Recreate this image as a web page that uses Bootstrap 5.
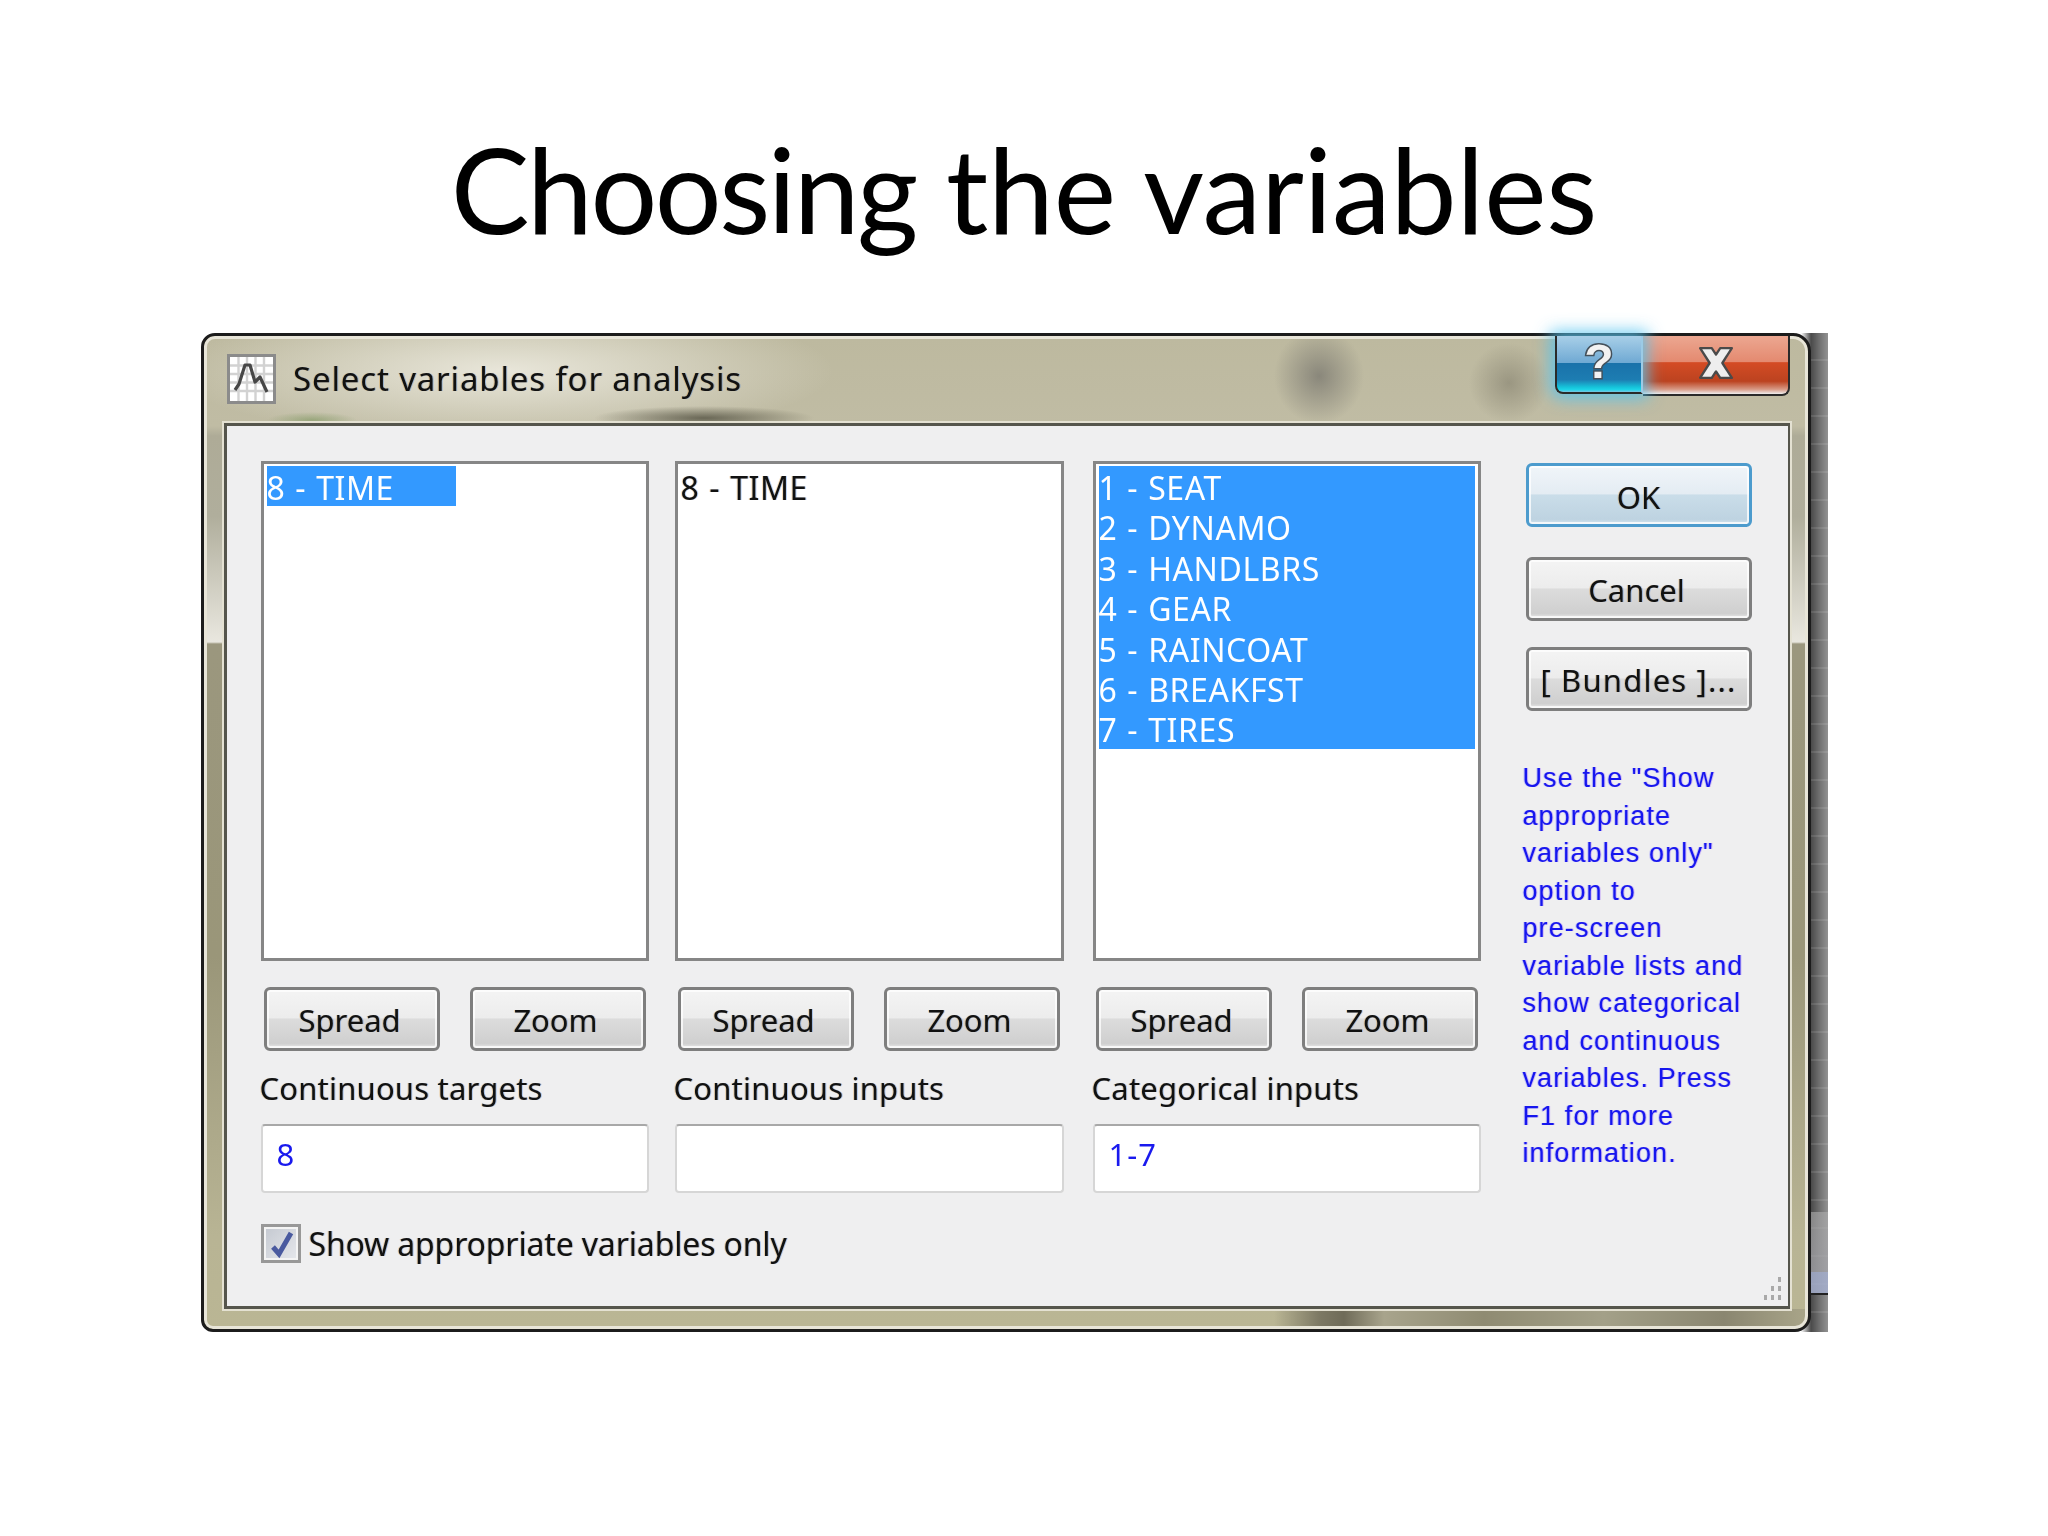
<!DOCTYPE html>
<html lang="en">
<head>
<meta charset="utf-8">
<title>Choosing the variables</title>
<link href="https://cdn.jsdelivr.net/npm/bootstrap@5.3.0/dist/css/bootstrap.min.css" rel="stylesheet">
<style>
html,body{background:#fff;margin:0}
.slide{width:2048px;height:1536px;overflow:hidden}
.slide-head{height:333px;padding-top:130px}
.slide-title{font-family:Lato,"Liberation Sans",sans-serif;font-size:118px;line-height:1;font-weight:400;color:#000;margin:0;letter-spacing:-.15px}
.title-tight{letter-spacing:-2.5px}
.dlg-wrap{width:1627px;height:999px;margin-left:201px;filter:blur(.55px);
 background:linear-gradient(180deg,transparent 0,transparent 879px,rgba(175,175,175,.6) 879px,rgba(165,165,170,.75) 939px,rgba(165,175,205,.85) 939px,rgba(165,175,205,.85) 960px,#222 960px,#222 962px,transparent 962px),
 repeating-linear-gradient(180deg,transparent 0 26px,rgba(255,255,255,.1) 26px 28px),
 linear-gradient(90deg,transparent 1600px,#4a4a4a 1610px,#6e6e6e 1618px,#929292 1627px)}
.dlg-win{width:1610px;height:999px;position:relative;border:3px solid #1c1c1c;border-radius:14px 18px 16px 12px;
 font-family:"Noto Sans","Liberation Sans",sans-serif;color:#111;
 text-shadow:1px 0 rgba(0,90,220,.28),-1px 0 rgba(220,130,0,.28);
 background:
 linear-gradient(90deg,transparent 1070px,#7d7964 1115px,#6f6b58 1140px,#a8a48c 1180px,#8f8b72 1280px,#a3a088 1400px,#8a8670 1520px,#a8a488 1600px) left bottom/100% 20px no-repeat,
 radial-gradient(ellipse 45px 48px at 1115px 40px,rgba(120,118,110,.75),transparent 100%),
 radial-gradient(ellipse 40px 40px at 1305px 47px,rgba(130,126,108,.6),transparent 100%),
 radial-gradient(ellipse 110px 12px at 500px 82px,rgba(90,88,72,.85),transparent 100%),
 radial-gradient(ellipse 45px 8px at 108px 84px,rgba(125,150,95,.6),transparent 100%),
 radial-gradient(ellipse 330px 70px at 300px 35px,rgba(240,238,228,.85),transparent 100%),
 linear-gradient(180deg,#bdb99f 0,#c0bca4 90px,#aeab97 100px,#b0ae9c 180px,#e9e7df 306px,#9b977e 308px,#9a9679 620px,#b8b494 900px,#bab694 999px);
 box-shadow:inset 0 0 0 3px #e8e5d8}
.dlg-bar{height:87px;position:relative}
.dlg-appicon{width:49px;height:50px;margin-left:23px;margin-top:18px;border:3px solid #8b8b8b;background:#fff;flex:none}
.dlg-appicon svg{display:block}
.dlg-caption{font-size:33px;line-height:1;margin-left:17px;margin-top:26px;letter-spacing:.85px}
.cap-group{margin-left:auto;margin-right:18px}
.cap-help,.cap-close{height:58px;display:flex;align-items:flex-start;justify-content:center;border:2px solid #2a2a2a;border-top:0;font-family:"Liberation Sans",sans-serif}
.cap-help{width:88px;border-right-color:#9ccbe6;border-radius:0 0 0 8px;background:linear-gradient(180deg,#a8cfe8 0,#6fa9d3 48%,#1a72aa 49%,#1d7db2 78%,#16c6dc 92%,#1fd4e8 96%,#7fc2df 100%);box-shadow:0 0 16px 5px rgba(88,196,240,.85);position:relative}
.cap-close{width:147px;height:60px;border-left:0;border-radius:0 0 8px 0;background:linear-gradient(180deg,#eca791 0,#e48a70 44%,#d44b24 46%,#bc4320 78%,#d89a86 92%,#eee 100%)}
.cap-q{font-size:48px;font-weight:700;line-height:1;margin-top:2px;color:#f2f2f2;-webkit-text-stroke:3px #44505a;paint-order:stroke fill;text-shadow:none}
.cap-x{margin-top:10px}
.dlg-panel{width:1566px;height:886px;margin-left:20px;position:relative;background:#efeff0;border:3px solid #55554c;border-width:3px 2px 3px 3px;padding:35px 0 0 33.5px;box-shadow:0 0 0 2px #e4e1d2}
.dlg-grid{display:grid;grid-template-columns:414px 418px 433px 226px}
.col-a{width:388px}
.col-b{width:389px}
.var-box{height:500px;border:3px solid #868686;background:#fff;padding:2px 3px;font-size:32px}
.var-list{--bs-list-group-bg:transparent;--bs-list-group-border-width:0;--bs-list-group-item-padding-x:0;--bs-list-group-item-padding-y:0;border-radius:0}
.var-row{height:40.4px;line-height:43px;padding:0;color:#111;letter-spacing:.6px;word-spacing:1px;white-space:nowrap}
.var-sel{background:#3399ff;color:#fff;text-shadow:none}
.var-sel-short{width:189px}
.var-tools{margin-top:26px;padding-left:3px;gap:30px}
.dlg-btn{height:64px;padding:2px 0 0;border:3px solid #7e7e7e;border-radius:6px;color:#111;font-size:31px;line-height:1;
 background:linear-gradient(180deg,#f4f4f4 0,#ececec 48%,#dcdcdc 50%,#cfcfcf 92%,#e8e8e8 100%);
 box-shadow:inset 0 0 0 2px rgba(255,255,255,.75);text-shadow:inherit;letter-spacing:0}
.dlg-btn:hover,.dlg-btn:focus{border-color:#7e7e7e;background:linear-gradient(180deg,#f4f4f4 0,#ececec 48%,#dcdcdc 50%,#cfcfcf 92%,#e8e8e8 100%);color:#111}
.btn-small{width:176px;padding-right:4px}
.btn-side{width:226px;display:block}
.btn-primaryish{margin-top:2px;padding-top:5px;border-color:#4c9bcd;background:linear-gradient(180deg,#f0f5f9 0,#e4ecf3 48%,#cadde9 50%,#bed3e1 92%,#d4e6f0 100%)}
.btn-primaryish:hover,.btn-primaryish:focus{border-color:#4c9bcd;background:linear-gradient(180deg,#f0f5f9 0,#e4ecf3 48%,#cadde9 50%,#bed3e1 92%,#d4e6f0 100%)}
.cancel-gap{margin-top:30px;padding-right:4px}
.bundles-gap{margin-top:26px;letter-spacing:1.2px;padding-right:0}
.var-label{font-size:31px;line-height:1;height:73px;padding-top:22px;margin-left:-1px;letter-spacing:.2px;white-space:nowrap}
.var-input{height:69px;background:#fff;border:2px solid #d6d6d6;border-top-color:#a8a8a8;border-radius:4px;color:#1a1aee;font-size:31px;line-height:1;padding:13px 14px;text-shadow:none;box-shadow:none;letter-spacing:1px}
.opt-row{margin-top:31px;height:39px}
.opt-check{width:40px;height:39px;border:3px solid #989898;background:linear-gradient(135deg,#c4c8d0,#e6e8ec);box-shadow:inset 0 0 0 2px #f4f4f4;flex:none}
.opt-check svg{display:block}
.opt-text{font-size:32px;line-height:39px;margin-left:8px;letter-spacing:-.15px;white-space:nowrap}
.side-help{margin:0;margin-left:-3px;margin-top:49px;font-family:"Liberation Sans",sans-serif;font-size:27px;line-height:37.5px;color:#1616ee;text-shadow:1px 0 rgba(150,90,255,.35),-1px 0 rgba(120,120,255,.35);width:250px;letter-spacing:1.1px}
.grip{position:absolute;right:6px;bottom:5px}
</style>
</head>
<body>
<div class="slide">
  <div class="slide-head text-center"><h1 class="slide-title"><span class="title-tight">Choosing</span> the variables</h1></div>
  <div class="dlg-wrap">
    <div class="dlg-win">
      <div class="dlg-bar d-flex align-items-start">
        <div class="dlg-appicon">
          <svg width="43" height="44" viewBox="0 0 43 44">
            <rect width="43" height="44" fill="#fff"/>
            <path d="M8.5 0V44M17 0V44M25.5 0V44M34 0V44M0 8.5H43M0 17H43M0 25.5H43M0 34H43" stroke="#d2d2d2" stroke-width="2.4" fill="none"/>
            <path d="M5 33 9 27 15 8 20 8 25 25 30 20 37 35" stroke="#474747" stroke-width="3.2" fill="none" stroke-linejoin="round"/>
          </svg>
        </div>
        <div class="dlg-caption">Select variables for analysis</div>
        <div class="cap-group d-flex">
          <div class="cap-help"><span class="cap-q">?</span></div>
          <div class="cap-close">
            <svg class="cap-x" width="36" height="34" viewBox="0 0 34 32"><path d="M2 2H13L17 8 21 2H32L23 16 32 30H21L17 24 13 30H2L11 16Z" fill="#eeeeee" stroke="#4a4a4a" stroke-width="2.2" stroke-linejoin="round"/></svg>
          </div>
        </div>
      </div>
      <div class="dlg-panel">
        <div class="dlg-grid">
          <div class="col-a">
            <div class="var-box">
              <ul class="list-group var-list">
                <li class="list-group-item var-row var-sel var-sel-short">8 - TIME</li>
              </ul>
            </div>
            <div class="var-tools d-flex">
              <button type="button" class="btn dlg-btn btn-small">Spread</button>
              <button type="button" class="btn dlg-btn btn-small">Zoom</button>
            </div>
            <div class="var-label">Continuous targets</div>
            <div class="var-input form-control">8</div>
          </div>
          <div class="col-b">
            <div class="var-box">
              <ul class="list-group var-list">
                <li class="list-group-item var-row">8 - TIME</li>
              </ul>
            </div>
            <div class="var-tools d-flex">
              <button type="button" class="btn dlg-btn btn-small">Spread</button>
              <button type="button" class="btn dlg-btn btn-small">Zoom</button>
            </div>
            <div class="var-label">Continuous inputs</div>
            <div class="var-input form-control"></div>
          </div>
          <div class="col-a">
            <div class="var-box">
              <ul class="list-group var-list">
                <li class="list-group-item var-row var-sel">1 - SEAT</li>
                <li class="list-group-item var-row var-sel">2 - DYNAMO</li>
                <li class="list-group-item var-row var-sel">3 - HANDLBRS</li>
                <li class="list-group-item var-row var-sel">4 - GEAR</li>
                <li class="list-group-item var-row var-sel">5 - RAINCOAT</li>
                <li class="list-group-item var-row var-sel">6 - BREAKFST</li>
                <li class="list-group-item var-row var-sel">7 - TIRES</li>
              </ul>
            </div>
            <div class="var-tools d-flex">
              <button type="button" class="btn dlg-btn btn-small">Spread</button>
              <button type="button" class="btn dlg-btn btn-small">Zoom</button>
            </div>
            <div class="var-label">Categorical inputs</div>
            <div class="var-input form-control">1-7</div>
          </div>
          <div class="d-flex flex-column">
            <button type="button" class="btn dlg-btn btn-side btn-primaryish">OK</button>
            <button type="button" class="btn dlg-btn btn-side cancel-gap">Cancel</button>
            <button type="button" class="btn dlg-btn btn-side bundles-gap">[ Bundles ]...</button>
            <p class="side-help">Use the "Show<br>appropriate<br>variables only"<br>option to<br>pre-screen<br>variable lists and<br>show categorical<br>and continuous<br>variables. Press<br>F1 for more<br>information.</p>
          </div>
        </div>
        <div class="opt-row d-flex">
          <div class="opt-check">
            <svg width="34" height="33" viewBox="0 0 34 33"><path d="M9 20 15 27 27 6" stroke="#4a5a9f" stroke-width="5" fill="none"/></svg>
          </div>
          <div class="opt-text">Show appropriate variables only</div>
        </div>
        <svg class="grip" width="20" height="24" viewBox="0 0 20 24"><g fill="#a9a9a9"><rect x="16" y="0" width="3" height="5"/><rect x="16" y="9" width="3" height="5"/><rect x="9" y="9" width="3" height="5"/><rect x="16" y="18" width="3" height="5"/><rect x="9" y="18" width="3" height="5"/><rect x="2" y="18" width="3" height="5"/></g></svg>
      </div>
    </div>
  </div>
</div>
<script src="https://cdn.jsdelivr.net/npm/bootstrap@5.3.0/dist/js/bootstrap.bundle.min.js"></script>
</body>
</html>
